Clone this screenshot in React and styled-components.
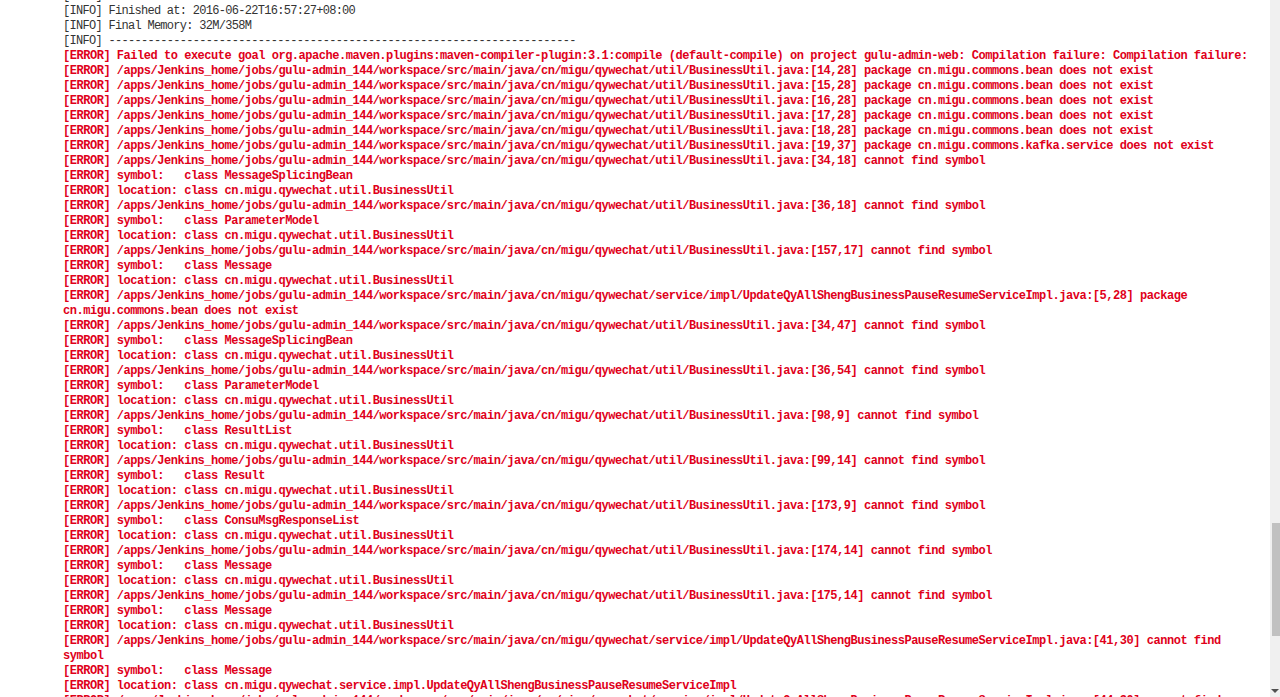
import React from 'react';
import styled, {createGlobalStyle} from 'styled-components';

const GlobalStyle = createGlobalStyle`
  html, body {
    margin: 0;
    padding: 0;
    background: #fff;
    overflow: hidden;
  }
`;

const BASE = '/apps/Jenkins_home/jobs/gulu-admin_144/workspace/src/main/java/cn/migu/qywechat/';
const UTIL = BASE + 'util/BusinessUtil.java:';
const IMPL = BASE + 'service/impl/UpdateQyAllShengBusinessPauseResumeServiceImpl.java:';
const LOC = 'location: class cn.migu.qywechat.util.BusinessUtil';

const info = [
  'Total time: 14.372 s',
  'Finished at: 2016-06-22T16:57:27+08:00',
  'Final Memory: 32M/358M',
  '-'.repeat(72),
];

const errors = [
  'Failed to execute goal org.apache.maven.plugins:maven-compiler-plugin:3.1:compile (default-compile) on project gulu-admin-web: Compilation failure: Compilation failure:',
  UTIL + '[14,28] package cn.migu.commons.bean does not exist',
  UTIL + '[15,28] package cn.migu.commons.bean does not exist',
  UTIL + '[16,28] package cn.migu.commons.bean does not exist',
  UTIL + '[17,28] package cn.migu.commons.bean does not exist',
  UTIL + '[18,28] package cn.migu.commons.bean does not exist',
  UTIL + '[19,37] package cn.migu.commons.kafka.service does not exist',
  UTIL + '[34,18] cannot find symbol',
  'symbol:   class MessageSplicingBean',
  LOC,
  UTIL + '[36,18] cannot find symbol',
  'symbol:   class ParameterModel',
  LOC,
  UTIL + '[157,17] cannot find symbol',
  'symbol:   class Message',
  LOC,
  IMPL + '[5,28] package cn.migu.commons.bean does not exist',
  UTIL + '[34,47] cannot find symbol',
  'symbol:   class MessageSplicingBean',
  LOC,
  UTIL + '[36,54] cannot find symbol',
  'symbol:   class ParameterModel',
  LOC,
  UTIL + '[98,9] cannot find symbol',
  'symbol:   class ResultList',
  LOC,
  UTIL + '[99,14] cannot find symbol',
  'symbol:   class Result',
  LOC,
  UTIL + '[173,9] cannot find symbol',
  'symbol:   class ConsuMsgResponseList',
  LOC,
  UTIL + '[174,14] cannot find symbol',
  'symbol:   class Message',
  LOC,
  UTIL + '[175,14] cannot find symbol',
  'symbol:   class Message',
  LOC,
  IMPL + '[41,30] cannot find symbol',
  'symbol:   class Message',
  'location: class cn.migu.qywechat.service.impl.UpdateQyAllShengBusinessPauseResumeServiceImpl',
  IMPL + '[44,30] cannot find symbol',
];

const Page = styled.div`
  display: flex;
  height: 697px;
  overflow: hidden;
`;

const Console = styled.pre`
  flex: 1;
  margin: -11px 0 0 0;
  padding: 0 10px 0 63px;
  font-family: "Liberation Mono", "DejaVu Sans Mono", monospace;
  font-size: 12px;
  line-height: 15px;
  white-space: pre-wrap;
  word-break: normal;
`;

const Line = styled.div`
  color: ${p => (p.error ? '#e0001a' : '#333')};
  font-weight: ${p => (p.error ? 'bold' : 'normal')};
  letter-spacing: ${p => (p.error ? '-0.47px' : '-0.71px')};
`;

const Track = styled.div`
  width: 10px;
  flex: none;
  background: #f0f0f0;
  display: flex;
  flex-direction: column;
  align-items: flex-end;
`;

const Thumb = styled.div`
  margin-top: 523px;
  width: 8px;
  height: 113px;
  background: #c1c1c1;
`;

const Arrow = styled.div`
  margin-top: auto;
  margin-bottom: 4px;
  margin-right: 1px;
  width: 0;
  height: 0;
  border-left: 4px solid transparent;
  border-right: 4px solid transparent;
  border-top: 4px solid #505050;
`;

export default function App() {
  return (
    <>
      <GlobalStyle />
      <Page>
        <Console>
          {info.map((t, i) => (
            <Line key={'i' + i}>{'[INFO] ' + t}</Line>
          ))}
          {errors.map((t, i) => (
            <Line key={'e' + i} error>{'[ERROR] ' + t}</Line>
          ))}
        </Console>
        <Track>
          <Thumb />
          <Arrow />
        </Track>
      </Page>
    </>
  );
}
